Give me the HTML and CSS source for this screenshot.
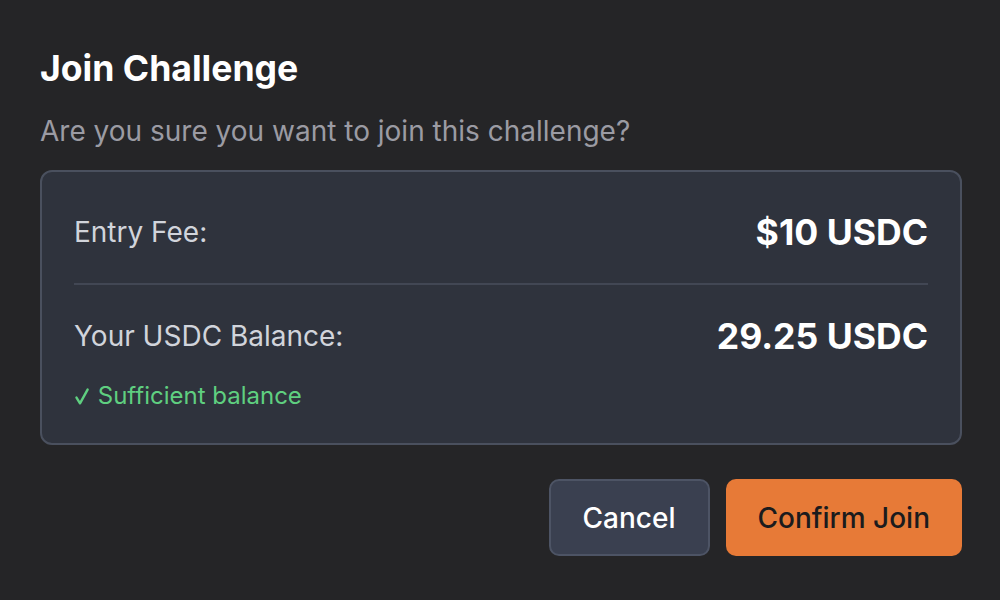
FILE: index.html
```html
<!DOCTYPE html>
<html>
<head>
<meta charset="utf-8">
<link rel="stylesheet" href="styles.css">
</head>
<body>
<div class="dialog">
  <h2 class="title">Join Challenge</h2>
  <p class="subtitle">Are you sure you want to join this challenge?</p>
  <div class="panel">
    <div class="row">
      <span class="label">Entry Fee:</span>
      <span class="value">$10 USDC</span>
    </div>
    <div class="divider"></div>
    <div class="row">
      <span class="label">Your USDC Balance:</span>
      <span class="value">29.25 USDC</span>
    </div>
    <div class="status"><svg class="check" width="14" height="17" viewBox="0 0 14 17"><path d="M1.5 9.6 L5 15.3 L12.6 1.6" fill="none" stroke="#5fcf80" stroke-width="2.4" stroke-linecap="round" stroke-linejoin="round"/></svg> Sufficient balance</div>
  </div>
  <div class="actions">
    <button class="btn btn-cancel">Cancel</button>
    <button class="btn btn-confirm">Confirm Join</button>
  </div>
</div>
</body>
</html>
```
FILE: styles.css
```css
html, body {
  margin: 0;
  padding: 0;
  background: #252527;
  height: 100%;
}
body {
  font-family: Inter, "Noto Sans", sans-serif;
  color: #fff;
}
.dialog {
  padding: 47px 38px 0 40px;
  display: flex;
  flex-direction: column;
}
.title {
  margin: 0;
  font-size: 35.6px;
  font-weight: 700;
  line-height: 44px;
  color: #ffffff;
}
.subtitle {
  margin: 20px 0 0;
  font-size: 28px;
  line-height: 40px;
  color: #9b9ba3;
}
.panel {
  margin-top: 19px;
  border: 2px solid #4a505e;
  border-radius: 12px;
  background: #2f333d;
  padding: 32px 32px 31px;
  display: flex;
  flex-direction: column;
}
.row {
  display: flex;
  justify-content: space-between;
  align-items: center;
  height: 56px;
}
.label {
  font-size: 28px;
  color: #d1d4db;
}
.value {
  font-size: 35.6px;
  font-weight: 700;
  color: #ffffff;
}
.divider {
  height: 2px;
  background: #424754;
  margin: 23px 0;
}
.status {
  margin-top: 16px;
  font-size: 24px;
  line-height: 32px;
  color: #5fcf80;
}
.check {
  display: inline-block;
  vertical-align: -1px;
  margin-left: 1px;
  margin-right: 2px;
}
.actions {
  margin-top: 34px;
  display: flex;
  justify-content: flex-end;
  gap: 16px;
}
.btn {
  font-family: Inter, "Noto Sans", sans-serif;
  font-size: 28px;
  font-weight: 500;
  height: 77px;
  border-radius: 10px;
  padding: 0 32px;
  cursor: pointer;
}
.btn-cancel {
  background: #3a4050;
  border: 2px solid #4d5465;
  color: #ffffff;
}
.btn-confirm {
  background: #e77a37;
  border: none;
  color: #1b1b1d;
}
```
